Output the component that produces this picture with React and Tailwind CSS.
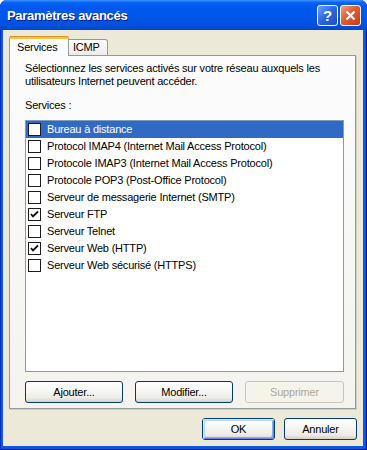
import { useState } from "react";

const services = [
  { label: "Bureau à distance", checked: false },
  { label: "Protocol IMAP4 (Internet Mail Access Protocol)", checked: false },
  { label: "Protocole IMAP3 (Internet Mail Access Protocol)", checked: false },
  { label: "Protocole POP3 (Post-Office Protocol)", checked: false },
  { label: "Serveur de messagerie Internet (SMTP)", checked: false },
  { label: "Serveur FTP", checked: true },
  { label: "Serveur Telnet", checked: false },
  { label: "Serveur Web (HTTP)", checked: true },
  { label: "Serveur Web sécurisé (HTTPS)", checked: false },
];

const XpButton = ({ children, width, isDefault, disabled }) => {
  if (disabled) {
    return (
      <div
        className="h-[22px] flex items-center justify-center rounded-[3px] border border-[#C9C7BA] bg-[#F5F4EA] text-[#ACA899]"
        style={{ width }}
      >
        {children}
      </div>
    );
  }
  return (
    <div
      className="h-[22px] flex items-center justify-center rounded-[3px] border border-[#003C74] bg-[linear-gradient(to_bottom,#FFFFFF_0%,#F7F7F4_40%,#ECEBE6_80%,#D6D0C5_100%)] text-black"
      style={{ width }}
    >
      {isDefault ? (
        <div className="w-full h-full rounded-[2px] flex items-center justify-center shadow-[inset_1px_1px_0_#CEE7FF,inset_-1px_-1px_0_#6982EE,inset_2px_2px_0_#BCD4F6,inset_-2px_-2px_0_#89ADE4]">
          {children}
        </div>
      ) : (
        children
      )}
    </div>
  );
};

const CheckBox = ({ checked }) => (
  <div className="w-[13px] h-[13px] border border-[#1C1C1C] bg-white flex items-center justify-center shrink-0">
    {checked && (
      <svg width="9" height="9" viewBox="0 0 9 9">
        <path d="M1 4 L3 6.5 L8 1.5" stroke="#111" strokeWidth="1.8" fill="none" />
      </svg>
    )}
  </div>
);

export default function App() {
  const [selected, setSelected] = useState(0);

  return (
    <div className="w-[367px] h-[450px] flex flex-col rounded-t-[7px] overflow-hidden bg-[#0A58E4] shadow-[inset_1px_0_0_#0029B8,inset_-1px_0_0_#00138C,inset_0_-1px_0_#00138C] font-['Liberation_Sans',Arial,sans-serif] text-[11px] tracking-[-0.2px] select-none">
      {/* Title bar */}
      <div className="h-[30px] shrink-0 flex items-center pl-[7px] pr-[6px] bg-[linear-gradient(to_bottom,#3D95FF_0%,#0A65F6_8%,#0058EE_22%,#0056E8_60%,#0051DD_85%,#0046C8_100%)]">
        <span className="flex-1 text-white font-bold text-[13px] tracking-[-0.3px] [text-shadow:1px_1px_#0A1883] pt-[1px]">
          Paramètres avancés
        </span>
        <div className="w-[21px] h-[21px] rounded-[3px] border border-white bg-[linear-gradient(135deg,#6F9DFF_0%,#2D63E0_50%,#1E4FCC_100%)] flex items-center justify-center text-white font-bold text-[15px] leading-none mr-[2px]">
          ?
        </div>
        <div className="w-[21px] h-[21px] rounded-[3px] border border-white bg-[linear-gradient(135deg,#F0A080_0%,#E05A32_45%,#C83C18_100%)] flex items-center justify-center">
          <svg width="11" height="11" viewBox="0 0 11 11">
            <path d="M1.5 1.5 L9.5 9.5 M9.5 1.5 L1.5 9.5" stroke="white" strokeWidth="2.2" />
          </svg>
        </div>
      </div>

      {/* Body */}
      <div className="flex-1 ml-[3px] mr-[4px] mb-[4px] bg-[#ECE9D8] flex flex-col px-[6px] pt-[6px]">
        {/* Tabs */}
        <div className="flex items-end h-[20px] relative z-10 -mb-px">
          <div className="w-[60px] h-[20px] rounded-t-[3px] border-x border-[#919B9C] bg-[#FCFCFE] flex flex-col">
            <div className="h-[3px] rounded-t-[3px] bg-[#FFC73C] border-t border-[#E68B2C] -mx-px" />
            <div className="flex-1 flex items-center pl-[7px]">Services</div>
          </div>
          <div className="w-[39px] h-[17px] rounded-tr-[3px] border-t border-r border-[#919B9C] border-b bg-[linear-gradient(to_bottom,#FFFFFF,#ECEBE6)] flex items-center pl-[4px]">
            ICMP
          </div>
        </div>

        {/* Panel */}
        <div className="w-[347px] h-[354px] border border-[#919B9C] shadow-[1px_1px_0_#D0CEBF] bg-[linear-gradient(to_bottom,#FCFCFE,#F4F3EE)] flex flex-col pl-[15px] pr-[11px] pt-[6px]">
          <p className="leading-[13px] text-black">
            Sélectionnez les services activés sur votre réseau auxquels les utilisateurs Internet peuvent accéder.
          </p>
          <p className="leading-[13px] mt-[11px]">Services :</p>

          <div className="mt-[8px] h-[252px] border border-[#7F9DB9] bg-white flex flex-col">
            {services.map((s, i) => (
              <div
                key={s.label}
                onClick={() => setSelected(i)}
                className={
                  "h-[17px] flex items-center pl-[2px] " +
                  (i === selected ? "bg-[#316AC5] text-white" : "text-black")
                }
              >
                <CheckBox checked={s.checked} />
                <span className="ml-[6px] whitespace-nowrap">{s.label}</span>
              </div>
            ))}
          </div>

          <div className="mt-[9px] flex justify-between">
            <XpButton width="98px">Ajouter...</XpButton>
            <XpButton width="98px">Modifier...</XpButton>
            <XpButton width="99px" disabled>
              Supprimer
            </XpButton>
          </div>
        </div>

        {/* Dialog buttons */}
        <div className="mt-[9px] flex justify-end gap-[9px]">
          <XpButton width="73px" isDefault>
            OK
          </XpButton>
          <XpButton width="73px">Annuler</XpButton>
        </div>
      </div>
    </div>
  );
}
